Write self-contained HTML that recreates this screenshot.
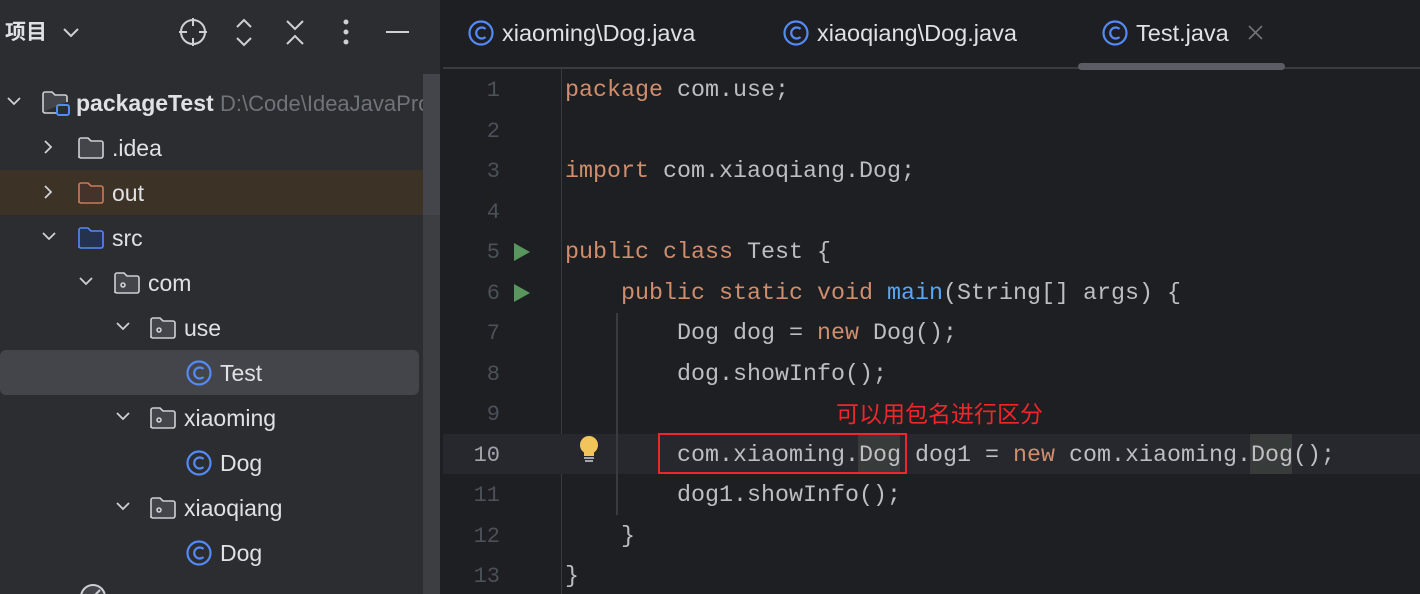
<!DOCTYPE html>
<html><head><meta charset="utf-8"><style>
*{margin:0;padding:0;box-sizing:border-box}
body{width:1420px;height:594px;overflow:hidden;background:#1e1f22;position:relative;font-family:"Liberation Sans","Noto Sans CJK SC",sans-serif}
.l{position:absolute;left:0;top:0;width:440px;height:594px;background:#2b2d30}
.a{position:absolute}
.t{position:absolute;font-size:23px;color:#dfe1e5;line-height:30px;white-space:nowrap}
.code{position:absolute;left:565px;font-family:"Liberation Mono",monospace;font-size:23.33px;color:#bcbec4;white-space:pre;line-height:30px}
.k{color:#cf8e6d}.m{color:#56a8f5}
.n{position:absolute;width:60px;text-align:right;left:440px;font-family:"Liberation Mono",monospace;font-size:22px;color:#4b5059;line-height:30px}
</style></head><body>
<div class="l"></div>
<div class="a" style="left:0;top:170px;width:440px;height:45px;background:#3d3226"></div>
<div class="a" style="left:0;top:350px;width:419px;height:45px;background:#43454a;border-radius:6px"></div>
<div class="t" style="left:5px;top:18px;font-weight:bold;font-size:21px">项目</div>
<svg class="a" style="left:0;top:0" width="440" height="70" fill="none" stroke="#ced0d6" stroke-width="2">
<path d="M64 29l7 7 7-7"/>
<circle cx="193" cy="32" r="12"/><path d="M193 18v8M193 38v8M179 32h8M199 32h8"/>
<path d="M237 27l7-7 7 7M237 38l7 7 7-7"/>
<path d="M287 21l8 8 8-8M287 44l8-8 8 8"/>
<circle cx="346" cy="22" r="1.5" fill="#ced0d6"/><circle cx="346" cy="32" r="1.5" fill="#ced0d6"/><circle cx="346" cy="42" r="1.5" fill="#ced0d6"/>
<path d="M386 32h23"/>
</svg>
<svg class="a" style="left:0;top:0" width="440" height="594" fill="none" stroke-width="1.6">
<g stroke="#ced0d6" stroke-width="1.8">
<path d="M8 98l6 6 6-6"/>
<path d="M45 141l6 6-6 6M45 186l6 6-6 6"/>
<path d="M43 233l6 6 6-6M80 278l6 6 6-6M117 323l6 6 6-6M117 413l6 6 6-6M117 503l6 6 6-6"/>
</g>
<path d="M43 112V94a2 2 0 0 1 2-2h7l3 3h10a2 2 0 0 1 2 2v5M57 113H45a2 2 0 0 1-2-2" stroke="#ced0d6" fill="#43454a"/>
<rect x="57" y="105" width="12" height="10" rx="2" stroke="#548af7" stroke-width="2"/>
<path d="M79 158V140a2 2 0 0 1 2-2h7l3 3h10a2 2 0 0 1 2 2v13a2 2 0 0 1-2 2H81a2 2 0 0 1-2-2z" stroke="#ced0d6" fill="#43454a"/>
<path d="M79 203V185a2 2 0 0 1 2-2h7l3 3h10a2 2 0 0 1 2 2v13a2 2 0 0 1-2 2H81a2 2 0 0 1-2-2z" stroke="#c77d55" fill="#45322a"/>
<path d="M79 248V230a2 2 0 0 1 2-2h7l3 3h10a2 2 0 0 1 2 2v13a2 2 0 0 1-2 2H81a2 2 0 0 1-2-2z" stroke="#548af7" fill="#25324d"/>
<g stroke="#ced0d6" fill="#43454a">
<path d="M115 293V275a2 2 0 0 1 2-2h7l3 3h10a2 2 0 0 1 2 2v13a2 2 0 0 1-2 2H117a2 2 0 0 1-2-2z"/><circle cx="123" cy="285" r="2"/>
<path d="M151 338V320a2 2 0 0 1 2-2h7l3 3h10a2 2 0 0 1 2 2v13a2 2 0 0 1-2 2H153a2 2 0 0 1-2-2z"/><circle cx="159" cy="330" r="2"/>
<path d="M151 428V410a2 2 0 0 1 2-2h7l3 3h10a2 2 0 0 1 2 2v13a2 2 0 0 1-2 2H153a2 2 0 0 1-2-2z"/><circle cx="159" cy="420" r="2"/>
<path d="M151 518V500a2 2 0 0 1 2-2h7l3 3h10a2 2 0 0 1 2 2v13a2 2 0 0 1-2 2H153a2 2 0 0 1-2-2z"/><circle cx="159" cy="510" r="2"/>
</g>
<circle cx="93" cy="597" r="12" stroke="#ced0d6" stroke-width="2" fill="#43454a"/><path d="M86 604l14-14" stroke="#ced0d6" stroke-width="2"/>
</svg>
<div class="t" style="left:76px;top:88px;font-weight:bold;width:364px;overflow:hidden">packageTest <span style="font-weight:normal;color:#6f737a;font-size:22px">D:\Code\IdeaJavaProject</span></div>
<div class="a" style="left:423px;top:74px;width:17px;height:520px;background:#3c3e42"></div>
<div class="a" style="left:423px;top:74px;width:17px;height:141px;background:#45474b;opacity:.85"></div>
<div class="t" style="left:112px;top:133px">.idea</div>
<div class="t" style="left:112px;top:178px">out</div>
<div class="t" style="left:112px;top:223px">src</div>
<div class="t" style="left:148px;top:268px">com</div>
<div class="t" style="left:184px;top:313px">use</div>
<div class="t" style="left:220px;top:358px">Test</div>
<div class="t" style="left:184px;top:403px">xiaoming</div>
<div class="t" style="left:220px;top:448px">Dog</div>
<div class="t" style="left:184px;top:493px">xiaoqiang</div>
<div class="t" style="left:220px;top:538px">Dog</div>
<svg class="a" style="left:0;top:0" width="1420" height="594" fill="none" stroke="#548af7" stroke-width="2.2">
<g><circle cx="199" cy="373" r="11.5"/><path d="M203.5 369a5.5 5.5 0 1 0 0 8"/></g>
<g><circle cx="199" cy="463" r="11.5"/><path d="M203.5 459a5.5 5.5 0 1 0 0 8"/></g>
<g><circle cx="199" cy="553" r="11.5"/><path d="M203.5 549a5.5 5.5 0 1 0 0 8"/></g>
<g><circle cx="481" cy="33" r="11.5"/><path d="M485.5 29a5.5 5.5 0 1 0 0 8"/></g>
<g><circle cx="796" cy="33" r="11.5"/><path d="M800.5 29a5.5 5.5 0 1 0 0 8"/></g>
<g><circle cx="1115" cy="33" r="11.5"/><path d="M1119.5 29a5.5 5.5 0 1 0 0 8"/></g>
<path d="M1249 26l13 13M1262 26l-13 13" stroke="#6f737a" stroke-width="1.6"/>
</svg>
<div class="t" style="left:502px;top:18px;font-size:23.5px">xiaoming\Dog.java</div>
<div class="t" style="left:817px;top:18px;font-size:23.5px">xiaoqiang\Dog.java</div>
<div class="t" style="left:1136px;top:18px;font-size:23.5px">Test.java</div>
<div class="a" style="left:443px;top:67px;width:977px;height:2px;background:#393b40"></div>
<div class="a" style="left:1078px;top:63px;width:207px;height:7px;background:#5a5d63;border-radius:4px"></div>
<div class="a" style="left:561px;top:69px;width:1px;height:525px;background:#393b40"></div>
<div class="a" style="left:443px;top:434px;width:977px;height:40px;background:#26282e"></div>
<div class="a" style="left:616px;top:313px;width:2px;height:202px;background:#393b40"></div>
<div class="a" style="left:858px;top:434px;width:42px;height:40px;background:#373b39"></div>
<div class="a" style="left:1250px;top:434px;width:42px;height:40px;background:#373b39"></div>
<div class="n" style="top:76px">1</div><div class="n" style="top:117px">2</div><div class="n" style="top:157px">3</div>
<div class="n" style="top:198px">4</div><div class="n" style="top:238px">5</div><div class="n" style="top:279px">6</div>
<div class="n" style="top:319px">7</div><div class="n" style="top:360px">8</div><div class="n" style="top:400px">9</div>
<div class="n" style="top:441px;color:#a1a3ab">10</div><div class="n" style="top:481px">11</div><div class="n" style="top:522px">12</div><div class="n" style="top:562px">13</div>
<svg class="a" style="left:0;top:0" width="1420" height="594">
<path d="M514 243l16 9-16 9z M514 284l16 9-16 9z" fill="#57965c"/>
<circle cx="589" cy="445" r="9" fill="#f2c55c"/><rect x="584" y="450" width="10" height="6" fill="#f2c55c"/>
<path d="M584 458h10M585 461h8" stroke="#ced0d6" stroke-width="1.5"/>
</svg>
<div class="code" style="top:76px"><span class="k">package</span> com.use;</div>
<div class="code" style="top:157px"><span class="k">import</span> com.xiaoqiang.Dog;</div>
<div class="code" style="top:238px"><span class="k">public class</span> Test {</div>
<div class="code" style="top:279px">    <span class="k">public static void</span> <span class="m">main</span>(String[] args) {</div>
<div class="code" style="top:319px">        Dog dog = <span class="k">new</span> Dog();</div>
<div class="code" style="top:360px">        dog.showInfo();</div>
<div class="code" style="top:441px">        com.xiaoming.Dog dog1 = <span class="k">new</span> com.xiaoming.Dog();</div>
<div class="code" style="top:481px">        dog1.showInfo();</div>
<div class="code" style="top:522px">    }</div>
<div class="code" style="top:562px">}</div>
<div class="a" style="left:658px;top:433px;width:249px;height:41px;border:2px solid #f0262b"></div>
<div class="t" style="left:836px;top:399px;color:#f0262b;font-size:23px">可以用包名进行区分</div>
</body></html>
